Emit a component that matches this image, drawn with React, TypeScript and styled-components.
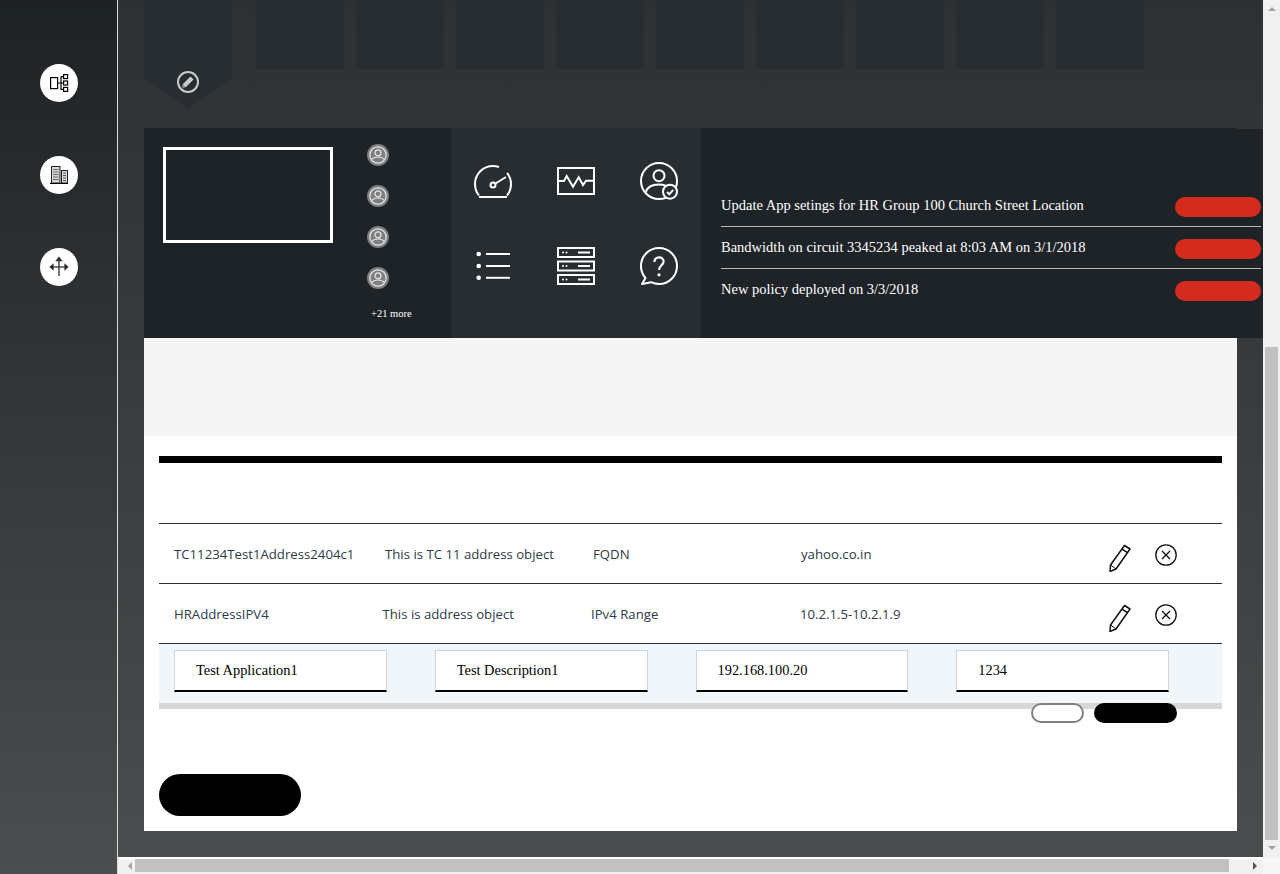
import React from 'react'
import styled, { createGlobalStyle } from 'styled-components'

const GlobalStyle = createGlobalStyle`
  html, body {
    margin: 0;
    padding: 0;
    height: 874px;
    overflow: hidden;
    background: #fff;
  }
`

const Shell = styled.div`
  display: flex;
  width: 1280px;
  height: 874px;
  overflow: hidden;
  font-family: 'Liberation Serif', serif;
`

const Sidebar = styled.nav`
  display: flex;
  flex-direction: column;
  align-items: center;
  flex: none;
  box-sizing: border-box;
  width: 118px;
  padding-top: 64px;
  gap: 54px;
  border-right: 1px solid #dcdcdc;
  background: linear-gradient(180deg, #1d2225 0%, #4a4e4e 100%);
`

const RoundButton = styled.button`
  display: flex;
  align-items: center;
  justify-content: center;
  width: 38px;
  height: 38px;
  padding: 0;
  border: 0;
  border-radius: 50%;
  background: #fff;
`

const Column = styled.div`
  display: flex;
  flex-direction: column;
  flex: 1;
  min-width: 0;
`

const MiddleRow = styled.div`
  display: flex;
  height: 857px;
`

const Viewport = styled.main`
  flex: none;
  box-sizing: border-box;
  width: 1145px;
  height: 857px;
  padding-left: 26px;
  overflow: hidden;
  background: linear-gradient(180deg, #2d3134 0%, #373a3d 40%, #494d4d 100%);
`

const Tabs = styled.div`
  display: flex;
  align-items: flex-start;
  height: 128px;
  gap: 12px;
`

const Tab = styled.div`
  flex: none;
  width: 88px;
  height: 69px;
  background: #272d30;
`

const ActiveTab = styled.div`
  display: flex;
  align-items: flex-start;
  justify-content: center;
  flex: none;
  box-sizing: border-box;
  width: 88px;
  height: 109px;
  margin-right: 12px;
  padding-top: 71px;
  background: #272d30;
  clip-path: polygon(0 0, 100% 0, 100% 71%, 50% 100%, 0 71%);
`

const Dashboard = styled.section`
  display: flex;
  width: 1119px;
  height: 210px;
  background:
    linear-gradient(#1e2327 0 0) 0 0 / 1093px 1px no-repeat,
    linear-gradient(#1e2327 0 0) 0 1px / 100% 100% no-repeat;
`

const Presence = styled.div`
  display: flex;
  flex: none;
  box-sizing: border-box;
  width: 307px;
  padding: 19px 0 0 19px;
`

const ScreenFrame = styled.div`
  flex: none;
  box-sizing: border-box;
  width: 170px;
  height: 96px;
  border: 3px solid #fff;
`

const People = styled.div`
  display: flex;
  flex-direction: column;
  gap: 19px;
  margin: -3px 0 0 34px;
`

const MoreLabel = styled.div`
  margin: -1px 0 0 4px;
  font-size: 10.5px;
  line-height: 14px;
  color: #fff;
  white-space: nowrap;
`

const Shortcuts = styled.div`
  display: grid;
  grid-template-columns: repeat(3, 38px);
  grid-auto-rows: 38px;
  column-gap: 45px;
  row-gap: 47px;
  flex: none;
  box-sizing: border-box;
  width: 250px;
  padding: 34px 0 0 23px;
  background: #272d30;
`

const Notices = styled.div`
  flex: none;
  width: 540px;
  margin-left: 20px;
  padding-top: 57px;
`

const NoticeRow = styled.div`
  display: flex;
  justify-content: space-between;
  box-sizing: border-box;
  height: 42px;
  padding-top: 12px;
  border-bottom: 1px solid #b6b6b6;
  font-size: 14.5px;
  line-height: 16px;
  color: #fff;

  &:last-child {
    border-bottom: 0;
  }
`

const NoticeText = styled.span`
  margin-top: 0;
  white-space: nowrap;
`

const RedPill = styled.span`
  flex: none;
  width: 86px;
  height: 20px;
  border-radius: 10px;
  background: #d42b1e;
`

const Sheet = styled.section`
  box-sizing: border-box;
  width: 1093px;
  height: 493px;
  background: #fff;
`

const GreyBand = styled.div`
  height: 98px;
  background: #f5f5f5;
`

const SheetBody = styled.div`
  padding: 20px 15px 0;
`

const HeavyRule = styled.div`
  height: 7px;
  margin-bottom: 60px;
  background: #000;
`

const TableRow = styled.div`
  display: flex;
  align-items: center;
  box-sizing: border-box;
  height: 60px;
  padding-left: 15px;
  border-top: 1px solid #2b2b2b;
  font-family: 'Open Sans', sans-serif;
  font-size: 13.2px;
  color: #2d3a48;
`

const Cell = styled.div<{ $width: number }>`
  flex: none;
  width: ${p => p.$width}px;
  white-space: nowrap;
`

const RowActions = styled.div`
  display: flex;
  align-items: flex-start;
  gap: 24px;
  margin-left: auto;
  padding: 9px 45px 0 0;
`

const EditRow = styled.form`
  display: flex;
  gap: 48px;
  box-sizing: border-box;
  height: 66px;
  margin: 0;
  padding: 6px 0 0 15px;
  border-top: 1px solid #2b2b2b;
  border-bottom: 6px solid #d6d8d8;
  background: #f0f6fa;
`

const TextField = styled.input`
  flex: none;
  box-sizing: border-box;
  width: 212.75px;
  height: 42px;
  padding: 0 0 0 21px;
  border: 1px solid #d0d4d6;
  border-bottom: 2px solid #000;
  border-radius: 0;
  outline: 0;
  background: #fff;
  font-family: 'Liberation Serif', serif;
  font-size: 14.4px;
  color: #000;
`

const FormButtons = styled.div`
  display: flex;
  justify-content: flex-end;
  gap: 10px;
  margin-top: -6px;
  padding-right: 45px;
`

const SmallButton = styled.button<{ $dark?: boolean }>`
  box-sizing: border-box;
  width: ${p => (p.$dark ? 83 : 53)}px;
  height: 20px;
  padding: 0;
  border: ${p => (p.$dark ? '0' : '2px solid #808080')};
  border-radius: 10px;
  background: ${p => (p.$dark ? '#000' : '#fff')};
`

const BigButton = styled.button`
  display: block;
  width: 142px;
  height: 42px;
  margin-top: 51px;
  padding: 0;
  border: 0;
  border-radius: 21px;
  background: #000;
`

const VerticalTrack = styled.div`
  display: flex;
  flex-direction: column;
  align-items: center;
  flex: none;
  box-sizing: border-box;
  width: 17px;
  padding: 347px 0 0;
  position: relative;
  background: #f1f1f1;
`

const VerticalThumb = styled.div`
  width: 13px;
  height: 493px;
  background: #c1c1c1;
`

const HorizontalRow = styled.div`
  display: flex;
  height: 17px;
`

const HorizontalTrack = styled.div`
  display: flex;
  align-items: center;
  flex: none;
  box-sizing: border-box;
  width: 1145px;
  padding: 0 2px 0 6px;
  background: #f1f1f1;
  border-top: 2px solid #fff;
  border-bottom: 2px solid #f1f1f1;
`

const HorizontalThumb = styled.div`
  width: 1094px;
  height: 13px;
  margin: 0 auto 0 3px;
  background: #c1c1c1;
`

const ScrollCorner = styled.div`
  flex: 1;
  background: #f6f6f6;
`

const Arrow = styled.span<{ $dir: 'up' | 'down' | 'left' | 'right'; $dark?: boolean }>`
  flex: none;
  width: 0;
  height: 0;
  border: 4px solid transparent;
  ${p => `border-${{ up: 'bottom', down: 'top', left: 'right', right: 'left' }[p.$dir]}-color: ${p.$dark ? '#505050' : '#a3a3a3'};`}
`

const UpArrow = styled(Arrow)`
  position: absolute;
  top: 3px;
`

const DownArrow = styled(Arrow)`
  position: absolute;
  bottom: 3px;
`

const TopologyIcon = () => (
  <svg width="38" height="38" viewBox="0 0 38 38" fill="none" stroke="#000" strokeWidth="1.2">
    <rect x="10.6" y="13.6" width="7" height="11" />
    <rect x="23.6" y="10.6" width="4" height="4" />
    <rect x="23.6" y="17" width="4" height="4" />
    <rect x="23.6" y="23.4" width="4" height="4" />
    <path d="M17.6 19H23.6M21 12.6V25.4H23.6M21 12.6H23.6" />
  </svg>
)

const BuildingIcon = () => (
  <svg width="38" height="38" viewBox="0 0 38 38" fill="none">
    <rect x="11.5" y="10.5" width="8.5" height="16.5" fill="#d8d8d8" stroke="#222" />
    <rect x="21.5" y="14.5" width="6" height="12.5" fill="#d8d8d8" stroke="#222" />
    <path d="M13 13.5H18.5M13 16H18.5M13 18.5H18.5M13 21H18.5M13 23.5H18.5" stroke="#666" />
    <path d="M23 17H26M23 19.5H26M23 22H26M23 24.5H26" stroke="#555" />
    <path d="M10 27.5H28" stroke="#000" />
  </svg>
)

const RoutesIcon = () => (
  <svg width="38" height="38" viewBox="0 0 38 38" fill="none" stroke="#333" strokeWidth="1.3">
    <path d="M19 10V28" strokeWidth="1.6" stroke="#555" />
    <path d="M11 19H27" />
    <path d="M19 9.5L16.6 12.6H21.4Z" fill="#222" />
    <path d="M10.3 19L13 16.6V21.4Z" fill="#222" />
    <path d="M27.7 19L25 16.6V21.4Z" fill="#222" />
  </svg>
)

const PencilBadge = () => (
  <svg width="22" height="22" viewBox="0 0 22 22" fill="none">
    <circle cx="11" cy="11" r="10" stroke="#c9cbcb" strokeWidth="2" />
    <path d="M7 15L15 7" stroke="#c9cbcb" strokeWidth="4.4" />
    <path d="M5.6 16.4L7 15" stroke="#8e9192" strokeWidth="3" />
  </svg>
)

const PersonDot = () => (
  <svg width="22" height="22" viewBox="0 0 22 22" fill="none">
    <circle cx="11" cy="11" r="11" fill="#7d7f80" />
    <circle cx="11" cy="11" r="8.2" stroke="#e6e6e6" strokeWidth="1.2" />
    <circle cx="11" cy="8.8" r="3" stroke="#e6e6e6" strokeWidth="1.2" />
    <path d="M4.8 15.4C6.4 13.4 8.6 13 11 13C13.4 13 15.6 13.4 17.2 15.4" stroke="#e6e6e6" strokeWidth="1.2" />
  </svg>
)

const GaugeIcon = () => (
  <svg width="38" height="38" viewBox="0 0 38 38" fill="none" stroke="#fff" strokeWidth="2">
    <path d="M5 33.5C2.4 30.4 1 26.4 1 22C1 12 9 4 19 4C21 4 23 4.3 25 5" />
    <path d="M33 11C35.6 14 37 17.8 37 22C37 26.4 35.6 30.4 33 33.5" />
    <path d="M5 35H33" />
    <circle cx="19" cy="23" r="2.5" />
    <path d="M21.5 21.5L32 15" />
  </svg>
)

const PulseIcon = () => (
  <svg width="38" height="38" viewBox="0 0 38 38" fill="none" stroke="#fff" strokeWidth="2">
    <rect x="1" y="6" width="36" height="26" />
    <path d="M1 19H7L9.7 14L16 24.7L21.7 15.3L26 23L29 18.7H37" />
  </svg>
)

const UserCheckIcon = () => (
  <svg width="38" height="38" viewBox="0 0 38 38" fill="none" stroke="#fff" strokeWidth="2">
    <circle cx="19" cy="19" r="18" />
    <circle cx="19" cy="13.7" r="5.5" />
    <path d="M5.5 31C7 24.5 13 22.5 19 22.5C21.5 22.5 23.6 22.8 25.5 23.6" />
    <circle cx="30" cy="29.7" r="7" fill="#272d30" />
    <path d="M27 30L29.3 32.3L33.2 27.8" />
  </svg>
)

const ListIcon = () => (
  <svg width="38" height="38" viewBox="0 0 38 38" fill="#fff" stroke="none">
    <circle cx="4.7" cy="7" r="2.3" />
    <circle cx="4.7" cy="19" r="2.3" />
    <circle cx="4.7" cy="30.8" r="2.3" />
    <rect x="12" y="6" width="24" height="2" />
    <rect x="12" y="18" width="24" height="2" />
    <rect x="12" y="29.8" width="24" height="2" />
  </svg>
)

const ServerIcon = () => (
  <svg width="38" height="38" viewBox="0 0 38 38" fill="none">
    {[0, 13.5, 27].map(y => (
      <g key={y} transform={`translate(0 ${y})`}>
        <rect x="1" y="1" width="36" height="9" stroke="#fff" strokeWidth="2" />
        <circle cx="6" cy="5.5" r="1" fill="#fff" />
        <circle cx="9.5" cy="5.5" r="1" fill="#fff" />
        <rect x="21" y="4.5" width="12" height="2" fill="#fff" />
      </g>
    ))}
  </svg>
)

const HelpIcon = () => (
  <svg width="38" height="38" viewBox="0 0 38 38" fill="none" stroke="#fff" strokeWidth="2">
    <path d="M5.5 31C2.7 27.8 1 23.6 1 19C1 9 9 1 19 1C29 1 37 9 37 19C37 29 29 37 19 37C16.2 37 13.6 36.4 11.2 35.2L2 37Z" strokeLinejoin="round" />
    <path d="M14.4 15C14.4 12.2 16.4 10.4 19 10.4C21.6 10.4 23.6 12.2 23.6 14.6C23.6 18.2 19 18.4 19 23" strokeWidth="2.2" />
    <circle cx="19" cy="27.8" r="1.6" fill="#fff" stroke="none" />
  </svg>
)

const EditPencil = () => (
  <svg width="22" height="28" viewBox="0 0 22 28" fill="none" stroke="#111" strokeWidth="1.5">
    <path d="M15.5 1.5L21 5L7 25L1 27.5L1.5 21Z" strokeLinejoin="round" />
    <path d="M13 5.2L18.5 8.7" />
    <path d="M1.5 21L7 25" strokeWidth="1" />
  </svg>
)

const RemoveCircle = () => (
  <svg width="22" height="22" viewBox="0 0 22 22" fill="none" stroke="#111" strokeWidth="1.3">
    <circle cx="11" cy="11" r="10.2" />
    <path d="M7 7L15 15M15 7L7 15" />
  </svg>
)

const addressRows = [
  { cells: ['TC11234Test1Address2404c1', 'This is TC 11 address object', 'FQDN', 'yahoo.co.in'], widths: [211, 208, 208, 200] },
  { cells: ['HRAddressIPV4', 'This is address object', 'IPv4 Range', '10.2.1.5-10.2.1.9'], widths: [208.5, 208.5, 209, 200] }
]

const notices = [
  'Update App setings for HR Group 100 Church Street Location',
  'Bandwidth on circuit 3345234 peaked at 8:03 AM on 3/1/2018',
  'New policy deployed on 3/3/2018'
]

const fieldValues = ['Test Application1', 'Test Description1', '192.168.100.20', '1234']

export default function App() {
  return (
    <Shell>
      <GlobalStyle />
      <Sidebar>
        <RoundButton>
          <TopologyIcon />
        </RoundButton>
        <RoundButton>
          <BuildingIcon />
        </RoundButton>
        <RoundButton>
          <RoutesIcon />
        </RoundButton>
      </Sidebar>
      <Column>
        <MiddleRow>
          <Viewport>
            <Tabs>
              <ActiveTab>
                <PencilBadge />
              </ActiveTab>
              {Array.from({ length: 9 }).map((_, i) => (
                <Tab key={i} />
              ))}
            </Tabs>
            <Dashboard>
              <Presence>
                <ScreenFrame />
                <People>
                  <PersonDot />
                  <PersonDot />
                  <PersonDot />
                  <PersonDot />
                  <MoreLabel>+21 more</MoreLabel>
                </People>
              </Presence>
              <Shortcuts>
                <GaugeIcon />
                <PulseIcon />
                <UserCheckIcon />
                <ListIcon />
                <ServerIcon />
                <HelpIcon />
              </Shortcuts>
              <Notices>
                {notices.map(text => (
                  <NoticeRow key={text}>
                    <NoticeText>{text}</NoticeText>
                    <RedPill />
                  </NoticeRow>
                ))}
              </Notices>
            </Dashboard>
            <Sheet>
              <GreyBand />
              <SheetBody>
                <HeavyRule />
                {addressRows.map(row => (
                  <TableRow key={row.cells[0]}>
                    {row.cells.map((text, i) => (
                      <Cell key={text} $width={row.widths[i]}>
                        {text}
                      </Cell>
                    ))}
                    <RowActions>
                      <EditPencil />
                      <RemoveCircle />
                    </RowActions>
                  </TableRow>
                ))}
                <EditRow>
                  {fieldValues.map(value => (
                    <TextField key={value} defaultValue={value} />
                  ))}
                </EditRow>
                <FormButtons>
                  <SmallButton />
                  <SmallButton $dark />
                </FormButtons>
                <BigButton />
              </SheetBody>
            </Sheet>
          </Viewport>
          <VerticalTrack>
            <UpArrow $dir="up" />
            <VerticalThumb />
            <DownArrow $dir="down" />
          </VerticalTrack>
        </MiddleRow>
        <HorizontalRow>
          <HorizontalTrack>
            <Arrow $dir="left" />
            <HorizontalThumb />
            <Arrow $dir="right" $dark />
          </HorizontalTrack>
          <ScrollCorner />
        </HorizontalRow>
      </Column>
    </Shell>
  )
}
